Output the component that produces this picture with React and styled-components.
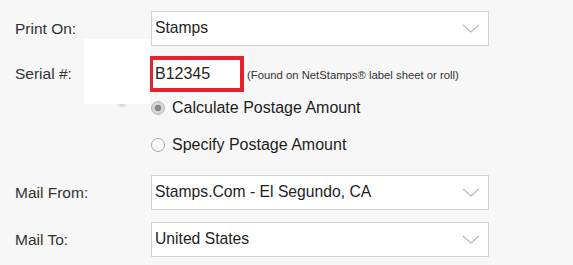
import React from 'react';
import styled, {createGlobalStyle} from 'styled-components';

const GlobalStyle = createGlobalStyle`
    html, body {
        margin: 0;
        padding: 0;
        background: #f7f7f7;
    }
    body {
        font-family: "Liberation Sans", Arial, Helvetica, sans-serif;
        color: #222;
    }
`

const FormWrap = styled.div`
    position: relative;
    width: 573px;
    height: 265px;
    padding-top: 11px;
    box-sizing: border-box;
    overflow: hidden;
`
const Row = styled.div`
    display: grid;
    grid-template-columns: 151px 338px;
    align-items: center;
    height: ${props => props.h || 35}px;
    margin-top: ${props => props.top || 0}px;
`
const Label = styled.span`
    padding-left: 15px;
    font-size: 15.5px;
    color: #333;
`
const SelectBox = styled.div`
    position: relative;
    display: flex;
    align-items: center;
    height: 35px;
    box-sizing: border-box;
    background: #fff;
    border: 1px solid #d3d3d3;
    padding: 0 30px 1px 3px;
    font-size: 15.7px;
    color: #1e1e1e;
`
const Chevron = styled.svg`
    position: absolute;
    right: 8px;
    top: 12px;
`
const SerialCell = styled.div`
    display: flex;
    align-items: center;
    gap: 3px;
    margin-left: -2px;
`
const SerialInput = styled.div`
    display: flex;
    align-items: center;
    width: 95px;
    height: 36px;
    box-sizing: border-box;
    border: 4px solid #e5212b;
    background: #fff;
    padding-left: 2px;
    font-size: 16px;
    color: #1e1e1e;
`
const Hint = styled.span`
    font-size: 11.3px;
    color: #333;
    padding-top: 1px;
`
const RadioGroup = styled.div`
    display: flex;
    flex-direction: column;
    gap: 17px;
    margin-top: 6px;
    padding-left: 151px;
`
const RadioRow = styled.label`
    display: flex;
    align-items: center;
    gap: 7px;
    height: 20px;
    font-size: 16px;
    color: #1e1e1e;
`
const RadioDot = styled.span`
    width: 14px;
    height: 14px;
    border-radius: 50%;
    box-sizing: border-box;
    border: 1px solid ${props => props.checked ? '#b8b8b8' : '#a9a9a9'};
    background: ${props => props.checked
        ? 'radial-gradient(circle, #8a8a8a 0 3px, #d6d6d6 3.6px)'
        : 'linear-gradient(#fff, #f4f4f4)'};
`
const Redaction = styled.div`
    position: absolute;
    left: 84px;
    top: 39px;
    width: 66px;
    height: 65px;
    background: #fff;
`
const Smudge = styled.div`
    position: absolute;
    left: 115px;
    top: 104px;
    width: 14px;
    height: 4px;
    border-radius: 50%;
    background: radial-gradient(ellipse at top, rgba(120,120,120,0.35), rgba(120,120,120,0) 70%);
`

const ChevronIcon = () => (
    <Chevron width="18" height="9" viewBox="0 0 18 9">
        <polyline points="1,1 9,8 17,1" fill="none" stroke="#b9b9b9" strokeWidth="1.2"/>
    </Chevron>
)

const Select = ({value}) => (
    <SelectBox>
        {value}
        <ChevronIcon/>
    </SelectBox>
)

export default function App() {
    return (
        <FormWrap>
            <GlobalStyle/>
            <Row>
                <Label>Print On:</Label>
                <Select value="Stamps"/>
            </Row>
            <Row h={36} top={10}>
                <Label>Serial #:</Label>
                <SerialCell>
                    <SerialInput>B12345</SerialInput>
                    <Hint>(Found on NetStamps® label sheet or roll)</Hint>
                </SerialCell>
            </Row>
            <RadioGroup>
                <RadioRow>
                    <RadioDot checked/>
                    Calculate Postage Amount
                </RadioRow>
                <RadioRow>
                    <RadioDot/>
                    Specify Postage Amount
                </RadioRow>
            </RadioGroup>
            <Row top={20}>
                <Label>Mail From:</Label>
                <Select value="Stamps.Com - El Segundo, CA"/>
            </Row>
            <Row top={12}>
                <Label>Mail To:</Label>
                <Select value="United States"/>
            </Row>
            <Smudge/>
            <Redaction/>
        </FormWrap>
    )
}
